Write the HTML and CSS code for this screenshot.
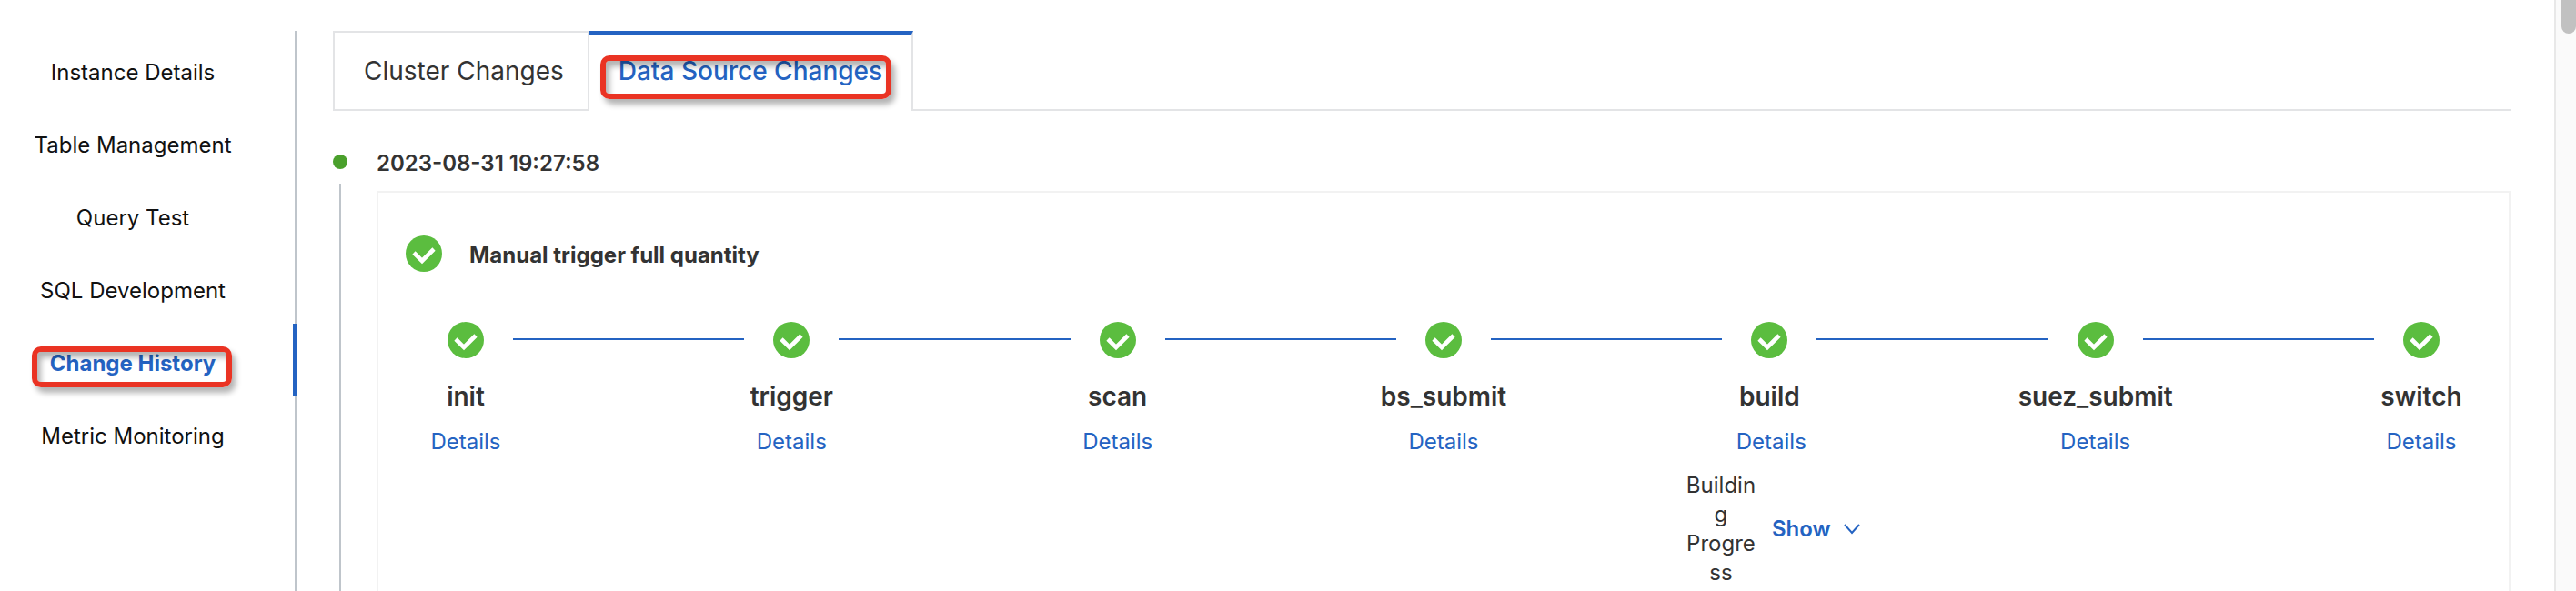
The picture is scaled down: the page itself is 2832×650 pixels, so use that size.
FILE: index.html
```html
<!DOCTYPE html>
<html lang="en">
<head>
  <meta charset="UTF-8" />
  <meta name="viewport" content="width=device-width, initial-scale=1.0"/>
  <title>Change History</title>
  <link rel="stylesheet" href="styles.css">
</head>
<body>

<svg class="sprite" aria-hidden="true">
  <symbol id="check" viewBox="0 0 40 40">
    <circle cx="20" cy="20" r="20" fill="#5bbd3f"/>
    <path d="M9 19 L18 28 L31 15" fill="none" stroke="#fff" stroke-width="4.6"/>
  </symbol>
</svg>

<div class="page">
  <nav class="sidebar">
    <a href="#details">Instance Details</a>
    <a href="#tables">Table Management</a>
    <a href="#query">Query Test</a>
    <a href="#sql">SQL Development</a>
    <a href="#history" class="active"><span class="marked">Change History</span></a>
    <a href="#metrics">Metric Monitoring</a>
  </nav>

  <main class="content">
    <div class="tabs" role="tablist">
      <button class="tab" role="tab">Cluster Changes</button>
      <button class="tab active" role="tab" aria-selected="true"><span class="marked">Data Source Changes</span></button>
      <div class="tabs-rest"></div>
    </div>

    <section class="timeline">
      <div class="rail">
        <span class="dot"></span>
        <span class="rail-line"></span>
      </div>
      <div class="entry">
        <time class="date">2023-08-31 19:27:58</time>
        <div class="card">
          <h2 class="card-title"><svg class="icon"><use href="#check"/></svg>Manual trigger full quantity</h2>
          <div class="steps">
            <div class="step">
              <svg class="icon"><use href="#check"/></svg>
              <h3>init</h3>
              <a href="#init">Details</a>
            </div>
            <div class="step-line"></div>
            <div class="step">
              <svg class="icon"><use href="#check"/></svg>
              <h3>trigger</h3>
              <a href="#trigger">Details</a>
            </div>
            <div class="step-line"></div>
            <div class="step">
              <svg class="icon"><use href="#check"/></svg>
              <h3>scan</h3>
              <a href="#scan">Details</a>
            </div>
            <div class="step-line"></div>
            <div class="step">
              <svg class="icon"><use href="#check"/></svg>
              <h3>bs_submit</h3>
              <a href="#bs_submit">Details</a>
            </div>
            <div class="step-line"></div>
            <div class="step">
              <svg class="icon"><use href="#check"/></svg>
              <h3>build</h3>
              <div class="step-extra">
                <a href="#build">Details</a>
                <div class="progress">
                  <span class="progress-label">Building Progress</span>
                  <button class="show">Show
                    <svg class="chevron" viewBox="0 0 18 12"><path d="M1 1 L9 10 L17 1" fill="none" stroke="currentColor" stroke-width="2"/></svg>
                  </button>
                </div>
              </div>
            </div>
            <div class="step-line"></div>
            <div class="step">
              <svg class="icon"><use href="#check"/></svg>
              <h3>suez_submit</h3>
              <a href="#suez_submit">Details</a>
            </div>
            <div class="step-line"></div>
            <div class="step">
              <svg class="icon"><use href="#check"/></svg>
              <h3>switch</h3>
              <a href="#switch">Details</a>
            </div>
          </div>
        </div>
      </div>
    </section>
  </main>

  <div class="scrollbar"><div class="thumb"></div></div>
</div>

</body>
</html>
```
FILE: styles.css
```css
* { box-sizing: border-box; }
body {
  margin: 0;
  font-family: Inter, 'Liberation Sans', sans-serif;
  font-size: 24px;
  line-height: 32px;
  background: #fff;
  color: #333;
}
a { text-decoration: none; color: #2463c2; }
button {
  font: inherit;
  color: inherit;
  background: none;
  border: none;
  padding: 0;
  cursor: pointer;
}
.sprite { display: none; }
.icon {
  display: block;
  width: 40px;
  height: 40px;
  flex: none;
}

.page {
  display: flex;
  height: 100vh;
  overflow: hidden;
}

/* left menu */
.sidebar {
  flex: none;
  width: 326px;
  margin-top: 34px;
  padding-top: 2px;
  background: linear-gradient(#bfc5cb, #bfc5cb) right / 2px 100% no-repeat;
}
.sidebar a {
  display: block;
  height: 80px;
  padding: 28px 34px 0 0;
  text-align: center;
  color: #111;
}
.sidebar a.active {
  padding-right: 30px;
  border-right: 4px solid #2463c2;
  color: #2463c2;
  font-weight: 700;
}

/* red highlight frame */
.marked { position: relative; }
.marked::after {
  content: '';
  position: absolute;
  inset: -4px -18px -12px -20px;
  border: 6px solid #ea3323;
  border-radius: 10px;
  box-shadow: 4px 6px 6px rgba(0,0,0,0.3), inset 4px 6px 6px rgba(0,0,0,0.3);
}
.tab .marked::after { inset: 0 -10px -14px -20px; }

.content {
  flex: 1;
  min-width: 0;
  display: flex;
  flex-direction: column;
  padding: 34px 48px 0 40px;
}

/* tabs */
.tabs {
  display: flex;
  height: 88px;
}
.tab {
  padding: 0 26px 0 32px;
  font-size: 28px;
  border: 2px solid #e3e4e6;
}
.tab.active {
  padding: 0 32px 4px;
  color: #2463c2;
  font-weight: 500;
  border-left: none;
  border-top: 4px solid #2463c2;
  border-bottom: none;
}
.tabs-rest {
  flex: 1;
  border-bottom: 2px solid #e3e4e6;
}

/* timeline */
.timeline {
  flex: 1;
  display: flex;
  gap: 32px;
  padding-top: 42px;
}
.rail {
  display: flex;
  flex-direction: column;
  align-items: center;
  width: 16px;
  padding-top: 6px;
}
.dot {
  width: 16px;
  height: 16px;
  border-radius: 50%;
  background: #4aa02c;
}
.rail-line {
  flex: 1;
  width: 2px;
  margin-top: 16px;
  background: #bfc5cb;
}
.entry {
  flex: 1;
  min-width: 0;
  display: flex;
  flex-direction: column;
}
.date { font-weight: 600; }
.card {
  flex: 1;
  margin-top: 14px;
  padding: 47px 44px 0;
  border: 2px solid #f2f2f2;
  border-bottom: none;
}
.card-title {
  display: flex;
  align-items: flex-end;
  gap: 30px;
  margin: 0 0 55px -14px;
  font-size: 24px;
  line-height: 36px;
  font-weight: 700;
}

/* steps */
.steps { display: flex; }
.step {
  flex: none;
  width: 104px;
  display: flex;
  flex-direction: column;
  align-items: center;
}
.step h3 {
  margin: 26px 0 18px;
  font-size: 28px;
  font-weight: 600;
}
.step-line {
  flex: 1;
  height: 2px;
  margin-top: 18px;
  background: #2463c2;
}
.step-extra {
  display: flex;
  flex-direction: column;
  align-items: center;
  padding-left: 4px;
}
.progress {
  display: flex;
  align-items: center;
  gap: 14px;
  margin-top: 16px;
}
.progress-label {
  width: 84px;
  text-align: center;
  overflow-wrap: break-word;
}
.show {
  display: flex;
  align-items: center;
  gap: 14px;
  color: #2463c2;
  font-weight: 600;
}
.chevron { width: 18px; height: 12px; }

/* scrollbar */
.scrollbar {
  flex: none;
  width: 24px;
  padding-left: 6px;
  border-left: 2px solid #e8e8e8;
  background: #fafafa;
}
.thumb {
  height: 37px;
  border-radius: 0 0 8px 8px;
  background: #c1c1c1;
}
```
